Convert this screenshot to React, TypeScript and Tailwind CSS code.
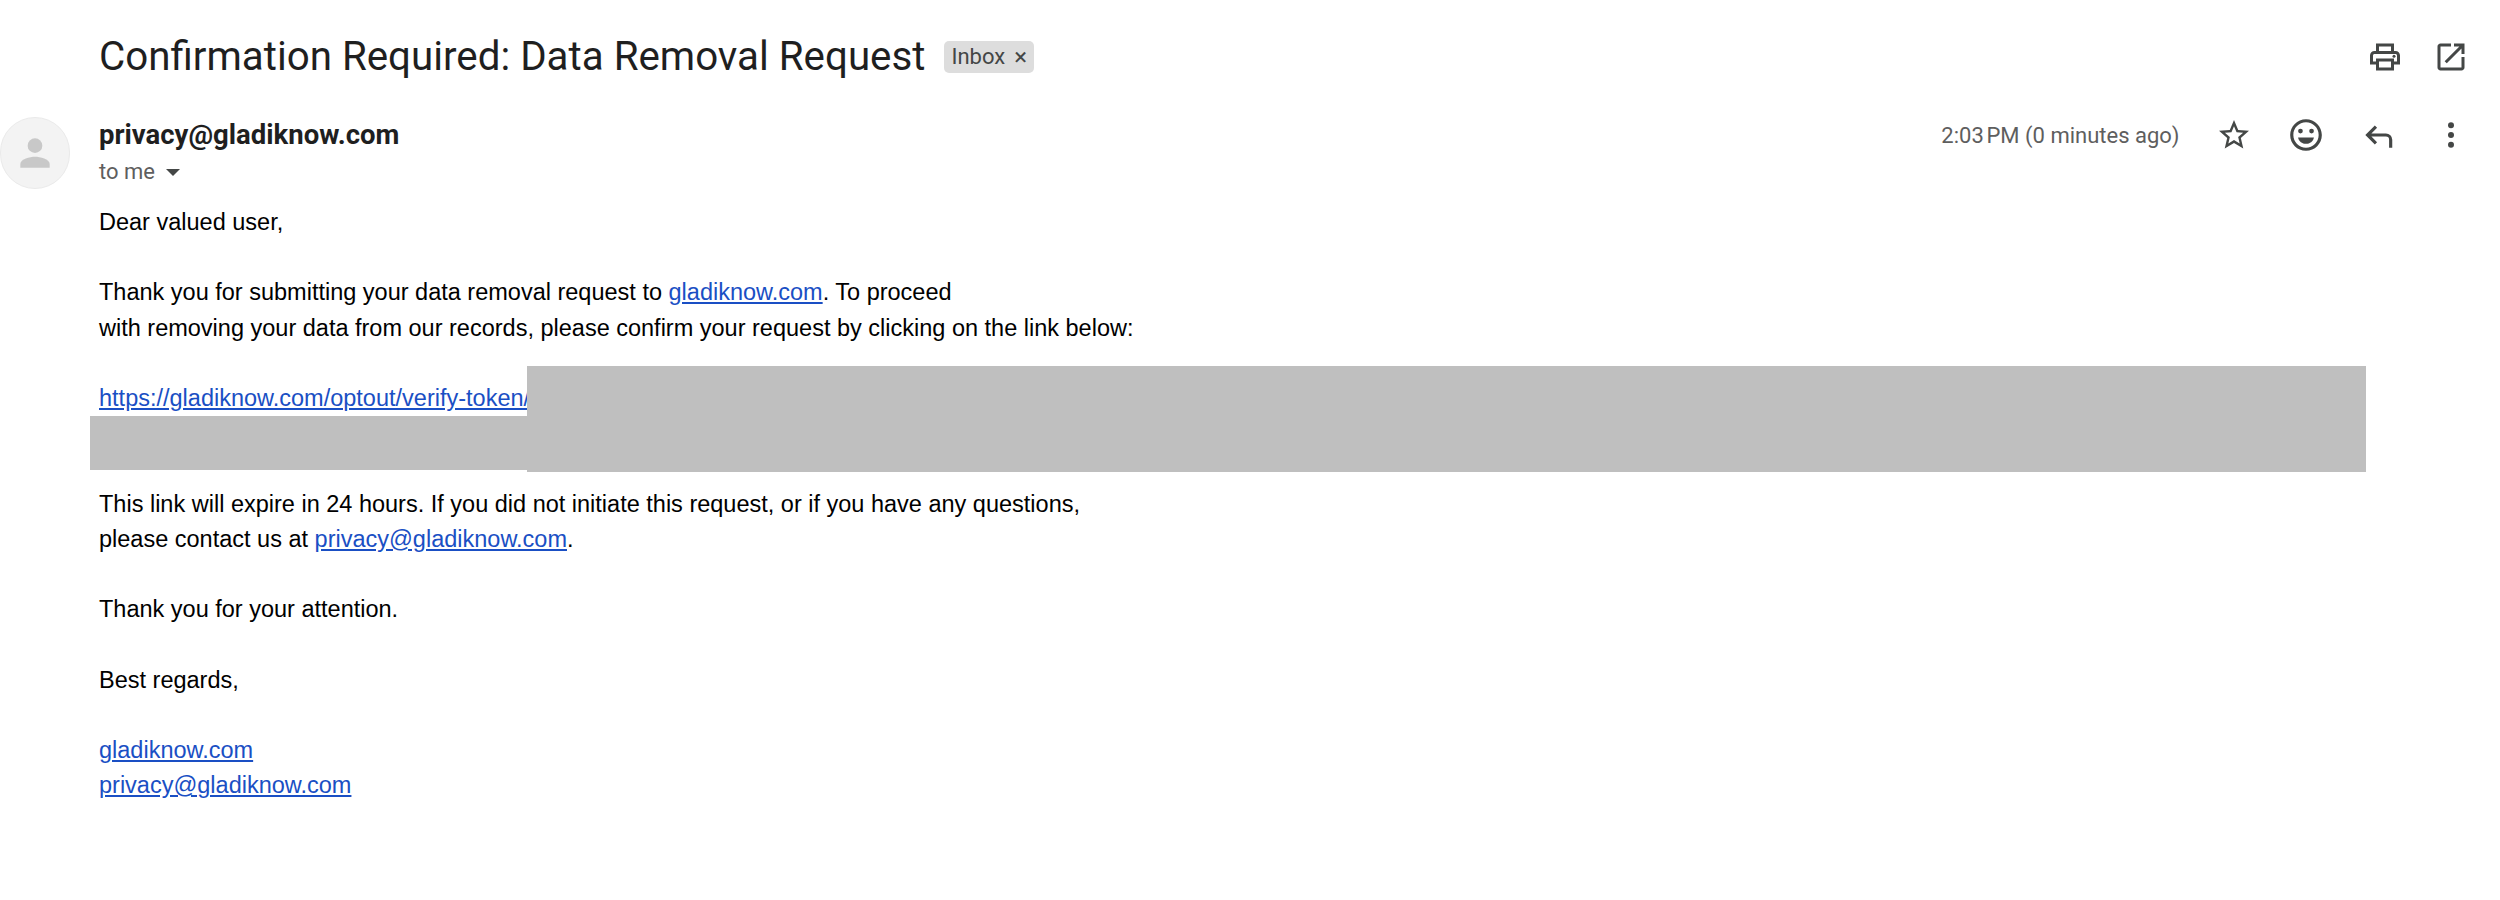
import React from "react";

const Ic = ({ children, cls }: { children: React.ReactNode; cls: string }) => (
  <svg viewBox="0 0 24 24" className={cls} fill="#444746">{children}</svg>
);

const A = ({ children }: { children: React.ReactNode }) => (
  <a className="text-[#1a4fc4] underline" href="#">{children}</a>
);

export default function App() {
  return (
    <div className="relative w-[2500px] h-[900px] overflow-hidden bg-white font-['Roboto',sans-serif]">
      <div className="flex items-center pl-[99px] pr-[31px] h-[112px] pt-[1px]">
        <h1 className="text-[40.3px] leading-[50px] text-[#1f1f1f] font-normal font-['Roboto',sans-serif]">Confirmation Required: Data Removal Request</h1>
        <span className="ml-[19px] flex items-center h-[32px] pl-[7px] pr-[7px] rounded-[5px] bg-[#dddddd] text-[22px] text-[#444746]">
          Inbox<span className="ml-[9px] text-[24px] leading-none">×</span>
        </span>
        <div className="ml-auto flex items-center gap-[30px]">
          <Ic cls="w-[36px] h-[36px]"><path d="M19 8h-1V3H6v5H5c-1.66 0-3 1.34-3 3v6h4v4h12v-4h4v-6c0-1.66-1.34-3-3-3zM8 5h8v3H8V5zm8 14H8v-4h8v4zm4-4h-2v-2H6v2H4v-4c0-.55.45-1 1-1h14c.55 0 1 .45 1 1v4z"/><circle cx="18" cy="11.500" r="1"/></Ic>
          <Ic cls="w-[36px] h-[36px]"><path d="M19 19H5V5h7V3H5c-1.1 0-2 .9-2 2v14c0 1.1.9 2 2 2h14c1.1 0 2-.9 2-2v-7h-2v7zM14 3v2h3.590l-9.830 9.830 1.410 1.410L19 6.410V10h2V3h-7z"/></Ic>
        </div>
      </div>
      <div className="flex h-[72px] mt-[5px]">
        <div className="w-[99px] shrink-0">
          <div className="w-[70px] h-[72px] rounded-full bg-[#f3f3f3] border border-[#eaeaea] flex items-center justify-center">
            <svg viewBox="0 0 24 24" className="w-[44px] h-[44px]" fill="#c8c8c8"><circle cx="12" cy="8" r="4"/><path d="M4 20v-2c0-2.700 5.300-4 8-4s8 1.300 8 4v2z"/></svg>
          </div>
        </div>
        <div className="flex-1 flex flex-col">
          <div className="text-[27.500px] leading-[36px] font-bold text-[#1f1f1f] font-['Roboto',sans-serif]">privacy@gladiknow.com</div>
          <div className="flex items-center text-[22px] leading-[36px] text-[#5e5e5e] mt-[1px]">
            to me
            <span className="ml-[11px] w-0 h-0 border-x-[7px] border-x-transparent border-t-[7px] border-t-[#444746]" />
          </div>
        </div>
        <div className="flex items-start pr-[31px]">
          <span className="text-[22px] leading-[36px] text-[#5e5e5e] mr-[36px] mt-[1px]">2:03{"\u202f"}PM (0 minutes ago)</span>
          <div className="flex items-center h-[36px] gap-[36.500px]">
            <Ic cls="w-[36px] h-[36px]"><path d="M22 9.240l-7.190-.620L12 2 9.190 8.630 2 9.240l5.460 4.730L5.820 21 12 17.270 18.180 21l-1.630-7.030L22 9.240zM12 15.400l-3.760 2.270 1-4.280-3.320-2.880 4.380-.380L12 6.100l1.710 4.040 4.380.380-3.320 2.880 1 4.280L12 15.400z"/></Ic>
            <Ic cls="w-[38px] h-[38px] -mx-[1px]"><path d="M12 2C6.470 2 2 6.470 2 12s4.470 10 10 10 10-4.470 10-10S17.530 2 12 2zm0 18c-4.410 0-8-3.590-8-8s3.590-8 8-8 8 3.590 8 8-3.590 8-8 8z"/><circle cx="8.500" cy="9.500" r="1.500"/><circle cx="15.500" cy="9.500" r="1.500"/><path d="M7 13.500h10c-.5 2.500-2.500 4-5 4s-4.500-1.500-5-4z"/></Ic>
            <Ic cls="w-[38px] h-[38px] -ml-[2px]"><path d="M21 20v-5a4 4 0 0 0-4-4H7.830l3.590-3.590L10 6l-6 6 6 6 1.410-1.410L7.830 13H17a2 2 0 0 1 2 2v5h2z"/></Ic>
            <Ic cls="w-[36px] h-[36px]"><circle cx="12" cy="5.500" r="2"/><circle cx="12" cy="12" r="2"/><circle cx="12" cy="18.500" r="2"/></Ic>
          </div>
        </div>
      </div>
      <div className="pl-[99px] pt-[16px] text-[23.500px] leading-[35.200px] text-[#000] font-['Liberation_Sans',Arial,sans-serif]">
        <p>Dear valued user,</p>
        <p className="mt-[35.200px]">Thank you for submitting your data removal request to <A>gladiknow.com</A>. To proceed</p>
        <p>with removing your data from our records, please confirm your request by clicking on the link below:</p>
        <p className="mt-[35.200px]"><A>https://gladiknow.com/optout/verify-token/</A></p>
        <p className="mt-[70.400px]">This link will expire in 24 hours. If you did not initiate this request, or if you have any questions,</p>
        <p>please contact us at <A>privacy@gladiknow.com</A>.</p>
        <p className="mt-[35.200px]">Thank you for your attention.</p>
        <p className="mt-[35.200px]">Best regards,</p>
        <p className="mt-[35.200px]"><A>gladiknow.com</A></p>
        <p><A>privacy@gladiknow.com</A></p>
      </div>
      <div className="absolute left-[527px] top-[366px] w-[1839px] h-[106px] bg-[#bfbfbf]" />
      <div className="absolute left-[90px] top-[416px] w-[437px] h-[54px] bg-[#bfbfbf]" />
    </div>
  );
}
